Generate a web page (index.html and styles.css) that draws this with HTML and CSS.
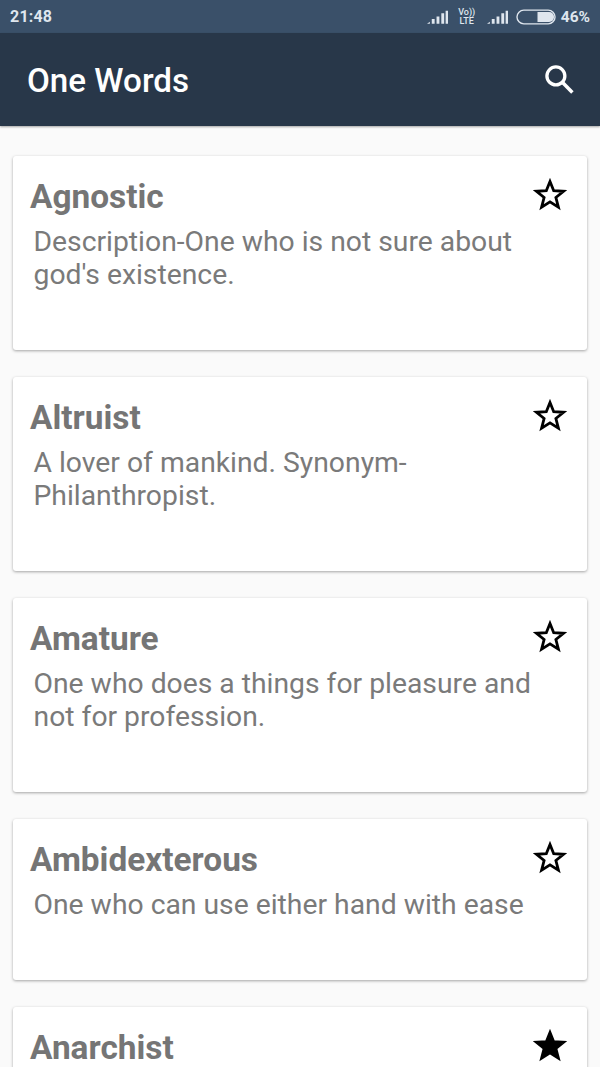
FILE: index.html
```html
<!DOCTYPE html>
<html lang="en">
<head>
<meta charset="utf-8">
<title>One Words</title>
<link rel="stylesheet" href="styles.css">
</head>
<body>
<div class="screen">
  <div class="status">
    <span class="time">21:48</span>
    <div class="status-right">
      <svg class="signal" viewBox="0 0 22 14"><path d="M0 14l3-2v2zM5 14v-5h3v5zM10 14V6.500h3V14zM15 14V3h3v11zM19.500 14V.5h2.500V14z"/></svg>
      <span class="lte">Vo))<br>LTE</span>
      <svg class="signal" viewBox="0 0 22 14"><path d="M0 14l3-2v2zM5 14v-5h3v5zM10 14V6.500h3V14zM15 14V3h3v11zM19.500 14V.5h2.500V14z"/></svg>
      <svg class="battery" viewBox="0 0 42 16"><rect x="1" y="1" width="39" height="14" rx="7" fill="none" stroke="#dfe6ee" stroke-width="1.4"/><path d="M22 3h12a5 5 0 0 1 0 10H22z" fill="#dfe6ee"/></svg>
      <span class="pct">46%</span>
    </div>
  </div>
  <header class="appbar">
    <h1 class="appbar-title">One Words</h1>
    <svg class="search" viewBox="0 0 32 32"><circle cx="12.5" cy="12.5" r="8.7" fill="none" stroke="#fff" stroke-width="3.2"/><path d="M19 19l9.5 9.5" fill="none" stroke="#fff" stroke-width="3.4"/></svg>
  </header>
  <main class="list">
    <article class="card">
      <div class="card-body"><h2 class="word">Agnostic</h2><p class="desc">Description-One who is not sure about god's existence.</p></div>
      <svg class="star" viewBox="0 0 34 34"><use href="#star-shape" fill="none" stroke="#000" stroke-width="2.8"/></svg>
    </article>
    <article class="card">
      <div class="card-body"><h2 class="word">Altruist</h2><p class="desc">A lover of mankind. Synonym-Philanthropist.</p></div>
      <svg class="star" viewBox="0 0 34 34"><use href="#star-shape" fill="none" stroke="#000" stroke-width="2.8"/></svg>
    </article>
    <article class="card">
      <div class="card-body"><h2 class="word">Amature</h2><p class="desc">One who does a things for pleasure and not for profession.</p></div>
      <svg class="star" viewBox="0 0 34 34"><use href="#star-shape" fill="none" stroke="#000" stroke-width="2.8"/></svg>
    </article>
    <article class="card">
      <div class="card-body"><h2 class="word">Ambidexterous</h2><p class="desc">One who can use either hand with ease</p></div>
      <svg class="star" viewBox="0 0 34 34"><use href="#star-shape" fill="none" stroke="#000" stroke-width="2.8"/></svg>
    </article>
    <article class="card">
      <div class="card-body"><h2 class="word">Anarchist</h2><p class="desc">&nbsp;</p></div>
      <svg class="star" viewBox="0 0 34 34"><use href="#star-shape" fill="#000" stroke="#000" stroke-width="2.8"/></svg>
    </article>
  </main>
</div>
<svg class="defs" aria-hidden="true"><defs><path id="star-shape" d="M17 3.5l3.7 9.2 9.8.6-7.6 6.2 2.5 9.6-8.4-5.3-8.4 5.3 2.5-9.6-7.6-6.2 9.8-.6z"/></defs></svg>
</body>
</html>
```
FILE: styles.css
```css
* { box-sizing: border-box; }
html, body { margin: 0; padding: 0; }
body { font-family: Roboto, "Liberation Sans", sans-serif; background: #fafafa; overflow: hidden; }
.screen { height: 1067px; overflow: hidden; display: flex; flex-direction: column; }
.defs { width: 0; height: 0; display: block; }

.status { flex: none; height: 33px; background: #3a5069; display: flex; align-items: center; justify-content: space-between; padding: 0 10px; color: #dfe6ee; }
.time { font-size: 16px; font-weight: 700; letter-spacing: .2px; }
.status-right { display: flex; align-items: center; }
.signal { width: 21px; height: 14px; fill: #dfe6ee; }
.lte { font-size: 9px; line-height: 9px; text-align: center; margin: 0 10px 0 9px; width: 20px; white-space: nowrap; font-weight: 500; }
.battery { width: 41px; height: 16px; margin-left: 8px; }
.pct { font-size: 15.5px; font-weight: 700; margin-left: 4px; }

.appbar { flex: none; height: 93px; background: #283749; display: flex; align-items: center; justify-content: space-between; padding: 0 24px 0 27px; box-shadow: 0 1px 2px rgba(0,0,0,.35); position: relative; }
.appbar-title { margin: 2px 0 0; font-size: 33.2px; font-weight: 500; color: #fff; }
.search { width: 33px; height: 33px; }

.list { flex: 1; padding: 30px 13px 0; display: flex; flex-direction: column; gap: 27px; }
.card { flex: none; background: #fff; border-radius: 3px; box-shadow: 0 1px 3px rgba(0,0,0,.35); display: flex; justify-content: space-between; align-items: flex-start; padding: 22px 20px 0 17px; }
.card-body { flex: 1; min-width: 0; padding-bottom: 59px; }
.word { margin: 0; font-size: 33.4px; line-height: 38px; font-weight: 700; color: #757575; }
.desc { margin: 0 -20px 0 0; padding: 9px 0 0 3.500px; font-size: 28.3px; line-height: 33px; color: #7a7a7a; }
.star { flex: none; width: 34px; height: 34px; }
```
